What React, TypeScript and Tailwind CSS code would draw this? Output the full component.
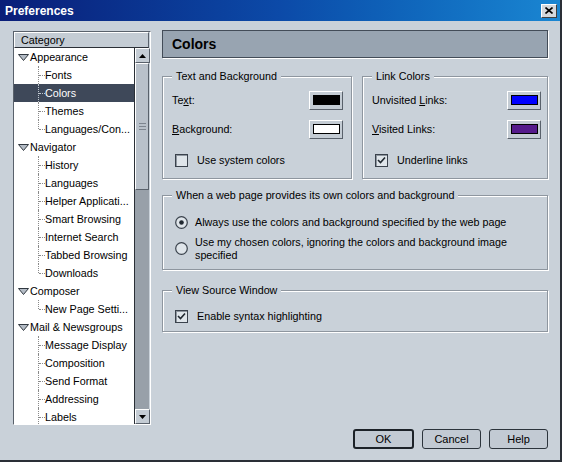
import type { ReactNode } from 'react';

type Row = { label: string; level: 0 | 1; selected?: boolean; last?: boolean };

const rows: Row[] = [
  { label: 'Appearance', level: 0 },
  { label: 'Fonts', level: 1 },
  { label: 'Colors', level: 1, selected: true },
  { label: 'Themes', level: 1 },
  { label: 'Languages/Con...', level: 1, last: true },
  { label: 'Navigator', level: 0 },
  { label: 'History', level: 1 },
  { label: 'Languages', level: 1 },
  { label: 'Helper Applicati...', level: 1 },
  { label: 'Smart Browsing', level: 1 },
  { label: 'Internet Search', level: 1 },
  { label: 'Tabbed Browsing', level: 1 },
  { label: 'Downloads', level: 1, last: true },
  { label: 'Composer', level: 0 },
  { label: 'New Page Setti...', level: 1, last: true },
  { label: 'Mail & Newsgroups', level: 0 },
  { label: 'Message Display', level: 1 },
  { label: 'Composition', level: 1 },
  { label: 'Send Format', level: 1 },
  { label: 'Addressing', level: 1 },
  { label: 'Labels', level: 1 },
];

const Twisty = () => (
  <svg width="11" height="7" viewBox="0 0 11 7" className="shrink-0">
    <path d="M0.5 0.5 H10.5 L5.5 6.5 Z" fill="#b4bcc6" stroke="#303840" />
  </svg>
);

const TreeRow = ({ row }: { row: Row }) => {
  if (row.level === 0) {
    return (
      <div className="h-[18px] flex items-center pl-[4px] gap-[1px]">
        <Twisty />
        <span>{row.label}</span>
      </div>
    );
  }
  return (
    <div className={`h-[18px] flex items-center relative ${row.selected ? 'bg-[#3e4859] text-white' : ''}`}>
      {/* vertical guide */}
      <div
        className={`absolute left-[24px] top-0 border-l border-dotted ${row.selected ? 'border-[#c0c8d0]' : 'border-[#8a8a8a]'} ${row.last ? 'h-[9px]' : 'h-[18px]'}`}
      />
      <div className={`absolute left-[25px] top-[9px] w-[6px] border-t border-dotted ${row.selected ? 'border-[#c0c8d0]' : 'border-[#8a8a8a]'}`} />
      <span className="pl-[31px] whitespace-nowrap">{row.label}</span>
    </div>
  );
};

const ArrowBtn = ({ down }: { down?: boolean }) => (
  <div className="h-[15px] w-[15px] bg-[#c4ccd4] border border-t-white border-l-white border-r-[#59616b] border-b-[#59616b] flex items-center justify-center">
    <svg width="7" height="4" viewBox="0 0 7 4">
      <path d={down ? 'M0 0 H7 L3.5 4 Z' : 'M0 4 H7 L3.5 0 Z'} fill="#000" />
    </svg>
  </div>
);

const Fieldset = ({ title, className, children }: { title: string; className?: string; children: ReactNode }) => (
  <fieldset className={`border border-[#8e969f] shadow-[inset_1px_1px_0_#fff,1px_1px_0_#fff] pl-[9px] ${className ?? ''}`}>
    <legend className="px-[4px] bg-[#c9d1d9]">{title}</legend>
    {children}
  </fieldset>
);

const Swatch = ({ color }: { color: string }) => (
  <div className="w-[34px] h-[19px] bg-[#c4ccd4] border border-t-white border-l-white border-r-[#59616b] border-b-[#59616b] flex items-center justify-center">
    <div className="w-[27px] h-[10px] border border-black" style={{ backgroundColor: color }} />
  </div>
);

const Check = ({ checked }: { checked?: boolean }) => (
  <div className="w-[13px] h-[13px] border border-[#3a424c] bg-[#dfe5ea] shadow-[inset_1px_1px_0_#8e969f] flex items-center justify-center">
    {checked && (
      <svg width="9" height="9" viewBox="0 0 9 9">
        <path d="M1 4 L3.5 6.5 L8 1.5" stroke="#202830" strokeWidth="1.6" fill="none" />
      </svg>
    )}
  </div>
);

const Radio = ({ on }: { on?: boolean }) => (
  <svg width="13" height="13" viewBox="0 0 13 13" className="shrink-0">
    <circle cx="6.5" cy="6.5" r="5.8" fill="#dfe5ea" stroke="#3a424c" strokeWidth="1.2" />
    {on && <circle cx="6.5" cy="6.5" r="2.3" fill="#202830" />}
  </svg>
);

const Button = ({ label, primary }: { label: string; primary?: boolean }) => (
  <button
    className={`h-[20px] rounded-[3px] bg-[#c2cad3] text-[11px] ${primary ? 'border-2 border-[#1c2228] w-[61px]' : 'border border-[#2c343c] w-[59px]'}`}
  >
    {label}
  </button>
);

export default function App() {
  return (
    <div className="w-[562px] h-[462px] bg-[#c9d1d9] border-r-2 border-b-2 border-r-[#2a2f36] border-b-[#2a2f36] flex flex-col overflow-hidden text-[10.75px] leading-none text-black font-['Liberation_Sans',Arial,sans-serif]">
      {/* title bar */}
      <div className="h-[21px] shrink-0 bg-gradient-to-r from-[#0a1d78] via-[#0c4aa8] to-[#1a86d2] flex items-center justify-between pl-[5px] pr-[3px]">
        <span className="text-white font-bold text-[12px]">Preferences</span>
        <div className="w-[16px] h-[14px] bg-[#d4d8dc] border border-t-white border-l-white border-r-[#404040] border-b-[#404040] flex items-center justify-center">
          <svg width="8" height="7" viewBox="0 0 8 7">
            <path d="M0.5 0.5 L7.5 6.5 M7.5 0.5 L0.5 6.5" stroke="#000" strokeWidth="1.6" />
          </svg>
        </div>
      </div>

      <div className="flex gap-[11px] pl-[13px] pr-[12px] pt-[10px]">
        {/* category tree */}
        <div className="w-[138px] h-[394px] border border-t-[#59616b] border-l-[#59616b] border-r-white border-b-white flex flex-col">
          <div className="h-[16px] shrink-0 bg-[#c4ccd4] border border-t-white border-l-white border-r-[#59616b] border-b-[#2a2f36] flex items-center pl-[6px] mr-[1px]">
            Category
          </div>
          <div className="flex-1 flex min-h-0">
            <div className="flex-1 bg-white overflow-hidden">
              {rows.map((r) => (
                <TreeRow key={r.label} row={r} />
              ))}
            </div>
            <div className="w-[15px] flex flex-col bg-[#98a0a9] border-l border-[#2a2f36] mr-[1px]">
              <ArrowBtn />
              <div className="h-[127px] bg-[#b9c1ca] border border-t-white border-l-white border-r-[#59616b] border-b-[#59616b] flex flex-col items-center justify-center gap-[2px]">
                <div className="w-[7px] h-px bg-[#7e8690]" />
                <div className="w-[7px] h-px bg-[#7e8690]" />
                <div className="w-[7px] h-px bg-[#7e8690]" />
              </div>
              <div className="flex-1" />
              <ArrowBtn down />
            </div>
          </div>
        </div>

        {/* right panel */}
        <div className="flex-1 flex flex-col">
          <div className="h-[28px] -mt-[1px] bg-[#98a4b1] border border-[#434c58] shadow-[1px_1px_0_#fff] flex items-center pl-[9px] font-bold text-[14px]">
            Colors
          </div>

          <div className="flex gap-[10px] mt-[13px]">
            <Fieldset title="Text and Background" className="w-[190px] h-[108px] pt-[4px] pr-[8px]">
              <div className="flex items-center justify-between h-[19px] mt-[5px]">
                <span>
                  Te<span className="underline">x</span>t:
                </span>
                <Swatch color="#000000" />
              </div>
              <div className="flex items-center justify-between h-[19px] mt-[10px]">
                <span>
                  <span className="underline">B</span>ackground:
                </span>
                <Swatch color="#ffffff" />
              </div>
              <div className="flex items-center gap-[9px] mt-[15px] pl-[3px]">
                <Check />
                <span>Use system colors</span>
              </div>
            </Fieldset>
            <Fieldset title="Link Colors" className="flex-1 h-[108px] pt-[4px] pr-[6px]">
              <div className="flex items-center justify-between h-[19px] mt-[5px]">
                <span>
                  Unvisited <span className="underline">L</span>inks:
                </span>
                <Swatch color="#0000ff" />
              </div>
              <div className="flex items-center justify-between h-[19px] mt-[10px]">
                <span>
                  <span className="underline">V</span>isited Links:
                </span>
                <Swatch color="#551a8b" />
              </div>
              <div className="flex items-center gap-[9px] mt-[15px] pl-[3px]">
                <Check checked />
                <span>Underline links</span>
              </div>
            </Fieldset>
          </div>

          <Fieldset title="When a web page provides its own colors and background" className="h-[80px] mt-[11px] pr-[12px]">
            <div className="flex items-center gap-[7px] mt-[15px] pl-[3px]">
              <Radio on />
              <span>Always use the colors and background specified by the web page</span>
            </div>
            <div className="flex items-center gap-[7px] mt-[7px] pl-[3px]">
              <Radio />
              <span className="leading-[13px]">
                Use my chosen colors, ignoring the colors and background image
                <br />
                specified
              </span>
            </div>
          </Fieldset>

          <Fieldset title="View Source Window" className="h-[47px] mt-[15px] pr-[12px]">
            <div className="flex items-center gap-[9px] mt-[14px] pl-[3px]">
              <Check checked />
              <span>Enable syntax highlighting</span>
            </div>
          </Fieldset>
        </div>
      </div>

      <div className="flex justify-end gap-[8px] pr-[12px] mt-[4px]">
        <Button label="OK" primary />
        <Button label="Cancel" />
        <Button label="Help" />
      </div>
    </div>
  );
}
